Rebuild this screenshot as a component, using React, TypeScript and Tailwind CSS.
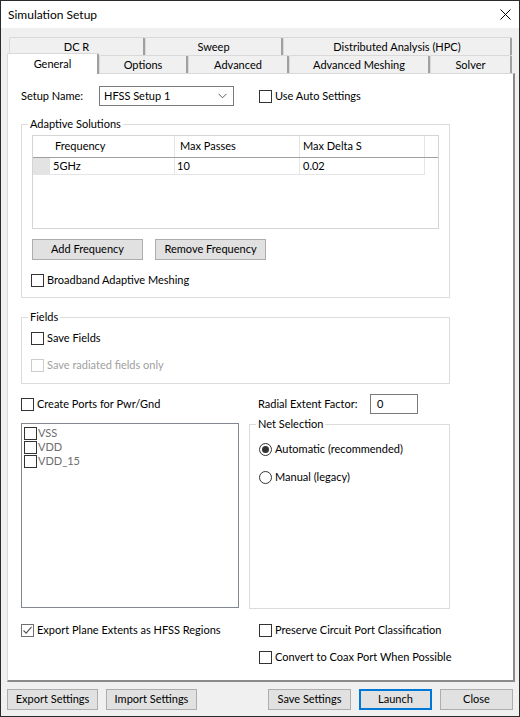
import React from 'react'

const font = "font-['Segoe_UI','Lato',sans-serif]"

// small win32-style pieces
const Box = ({ checked = false, disabled = false }: { checked?: boolean; disabled?: boolean }) => (
  <span
    className={`flex h-[13px] w-[13px] shrink-0 items-center justify-center border bg-white ${
      disabled ? 'border-[#cccccc]' : checked ? 'border-[#707070]' : 'border-[#333333]'
    }`}
  >
    {checked && (
      <svg width="11" height="11" viewBox="0 0 11 11">
        <path d="M1.5 5.5l2.7 2.7 5.3-6.4" fill="none" stroke="#555555" strokeWidth="1.1" />
      </svg>
    )}
  </span>
)

const Check = ({
  label,
  checked,
  disabled,
  className = '',
}: {
  label: string
  checked?: boolean
  disabled?: boolean
  className?: string
}) => (
  <div className={`flex h-4 items-center gap-[3px] ${disabled ? 'text-[#a0a0a0]' : 'text-black'} ${className}`}>
    <Box checked={checked} disabled={disabled} />
    <span className="leading-4 whitespace-nowrap">{label}</span>
  </div>
)

const Radio = ({ label, checked, className = '' }: { label: string; checked?: boolean; className?: string }) => (
  <div className={`flex h-4 items-center gap-[3px] ${className}`}>
    <span className="flex h-[13px] w-[13px] items-center justify-center rounded-full border border-[#333333] bg-white">
      {checked && <span className="h-[7px] w-[7px] rounded-full bg-[#333333]" />}
    </span>
    <span className="leading-4 whitespace-nowrap">{label}</span>
  </div>
)

const Button = ({ label, className = '', primary = false }: { label: string; className?: string; primary?: boolean }) => (
  <div
    className={`flex h-[21px] items-center justify-center bg-[#e1e1e1] ${
      primary ? 'border-2 border-[#0078d7]' : 'border border-[#adadad]'
    } ${className}`}
  >
    {label}
  </div>
)

const Tab = ({ label, className = '', selected = false }: { label: string; className?: string; selected?: boolean }) => (
  <div
    className={`flex shrink-0 items-center justify-center rounded-t-[2px] border-t border-l border-r-2 border-t-[#d9d9d9] border-l-[#d9d9d9] border-r-[#a0a0a0] ${
      selected ? 'relative z-10 -mb-px h-[21px] bg-white' : 'h-[18px] bg-[#f0f0f0] pt-px'
    } ${className}`}
  >
    {label}
  </div>
)

const Group = ({ title, className = '', children }: { title: string; className?: string; children: React.ReactNode }) => (
  <fieldset className={`border border-[#dcdcdc] ${className}`}>
    <legend className="-ml-[3px] px-[2px] leading-4">{title}</legend>
    {children}
  </fieldset>
)

export default function App() {
  return (
    <div className={`${font} flex h-[717px] w-[520px] flex-col border border-[#2b2b2b] bg-[#f0f0f0] text-[11px] text-black`}>
      {/* title bar */}
      <div className="flex h-[27px] shrink-0 items-center justify-between bg-white pl-[7px] pr-[8px]">
        <span className="text-[12px] leading-4">Simulation Setup</span>
        <svg width="11" height="11" viewBox="0 0 11 11">
          <path d="M0.5 0.5l10 10M10.5 0.5l-10 10" stroke="#000" strokeWidth="1" />
        </svg>
      </div>

      {/* tabs */}
      <div className="mt-[9px] ml-[8px] flex h-[18px]">
        <Tab label="DC R" className="w-[136px]" />
        <Tab label="Sweep" className="w-[138px]" />
        <Tab label="Distributed Analysis (HPC)" className="w-[229px]" />
      </div>
      <div className="ml-[6px] flex h-[18px] items-end">
        <Tab label="General" selected className="w-[92px]" />
        <Tab label="Options" className="w-[89px]" />
        <Tab label="Advanced" className="w-[101px]" />
        <Tab label="Advanced Meshing" className="w-[141px]" />
        <Tab label="Solver" className="w-[82px]" />
      </div>

      {/* page */}
      <div className="ml-[6px] flex h-[609px] w-[508px] shrink-0 flex-col border-t border-l border-r-2 border-b-2 border-t-[#d9d9d9] border-l-[#d9d9d9] border-r-[#8a8a8a] border-b-[#8a8a8a] bg-white pl-[13px]">
        <div className="mt-[12px] flex h-[20px] items-center">
          <span className="w-[78px]">Setup Name:</span>
          <div className="flex h-[20px] w-[135px] items-center justify-between border border-[#7a7a7a] bg-white pl-[4px] pr-[6px]">
            <span>HFSS Setup 1</span>
            <svg width="9" height="6" viewBox="0 0 9 6">
              <path d="M0.5 0.8l4 4 4-4" fill="none" stroke="#606060" strokeWidth="1" />
            </svg>
          </div>
          <Check label="Use Auto Settings" className="ml-[25px]" />
        </div>

        <Group title="Adaptive Solutions" className="mt-[10px] w-[429px] pl-[9px] pb-[9px]">
          <div className="mt-[3px] ml-px flex h-[94px] w-[407px] flex-col border border-[#d4d4d4] bg-white">
            <div className="flex h-[22px] shrink-0 border-b border-[#a0a0a0]">
              <div className="w-[17px]" />
              <div className="flex w-[125px] items-center border-r border-[#e5e5e5] pl-[5px]">Frequency</div>
              <div className="flex w-[125px] items-center border-r border-[#e5e5e5] pl-[5px]">Max Passes</div>
              <div className="flex w-[125px] items-center border-r border-[#e5e5e5] pl-[3px]">Max Delta S</div>
            </div>
            <div className="flex h-[17px] w-[392px] shrink-0 border-b border-[#e5e5e5]">
              <div className="w-[17px] bg-[#e3e3e3]" />
              <div className="flex w-[125px] items-center border-r border-[#e5e5e5] pl-[3px]">5GHz</div>
              <div className="flex w-[125px] items-center border-r border-[#e5e5e5] pl-[2px]">10</div>
              <div className="flex w-[125px] items-center border-r border-[#e5e5e5] pl-[3px]">0.02</div>
            </div>
          </div>
          <div className="mt-[10px] ml-px flex">
            <Button label="Add Frequency" className="w-[111px]" />
            <Button label="Remove Frequency" className="ml-[12px] w-[111px]" />
          </div>
          <Check label="Broadband Adaptive Meshing" className="mt-[12px]" />
        </Group>

        <Group title="Fields" className="mt-[11px] w-[429px] pl-[9px] pb-[10px]">
          <Check label="Save Fields" className="mt-[5px]" />
          <Check label="Save radiated fields only" disabled className="mt-[11px]" />
        </Group>

        <div className="mt-[10px] flex h-[20px] items-center">
          <Check label="Create Ports for Pwr/Gnd" className="w-[237px]" />
          <span className="w-[112px]">Radial Extent Factor:</span>
          <div className="flex h-[20px] w-[48px] items-center border border-[#7a7a7a] bg-white pl-[6px]">0</div>
        </div>

        <div className="mt-[2px] flex items-start">
          <div className="mt-[7px] flex h-[185px] w-[218px] flex-col border border-[#828790] bg-white pt-[2px] pl-[2px] text-[#6d6d6d]">
            {['VSS', 'VDD', 'VDD_15'].map((n) => (
              <div key={n} className="flex h-[14px] items-center gap-[1px]">
                <Box />
                <span className="leading-[14px]">{n}</span>
              </div>
            ))}
          </div>
          <Group title="Net Selection" className="ml-[10px] h-[193px] w-[201px] pl-[9px]">
            <Radio label="Automatic (recommended)" checked className="mt-[9px]" />
            <Radio label="Manual (legacy)" className="mt-[12px]" />
          </Group>
        </div>

        <div className="mt-[13px] flex">
          <Check label="Export Plane Extents as HFSS Regions" checked className="w-[238px]" />
          <Check label="Preserve Circuit Port Classification" />
        </div>
        <div className="mt-[11px] flex">
          <div className="w-[238px]" />
          <Check label="Convert to Coax Port When Possible" />
        </div>
      </div>

      {/* dialog buttons */}
      <div className="mt-[7px] flex">
        <Button label="Export Settings" className="ml-[6px] w-[91px]" />
        <Button label="Import Settings" className="ml-[8px] w-[91px]" />
        <Button label="Save Settings" className="ml-[71px] w-[83px]" />
        <Button label="Launch" primary className="ml-[8px] w-[73px]" />
        <Button label="Close" className="ml-[8px] w-[73px]" />
      </div>
    </div>
  )
}
